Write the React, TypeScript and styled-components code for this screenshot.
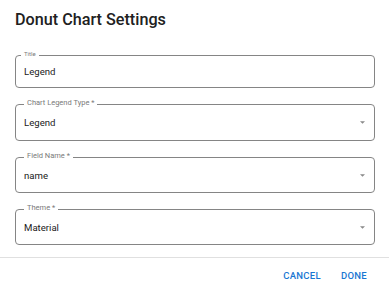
import styled, { createGlobalStyle } from "styled-components";

const GlobalStyle = createGlobalStyle`
  body {
    margin: 0;
    background: #ffffff;
    font-family: Roboto, "Liberation Sans", Arial, sans-serif;
  }
`;

interface FieldDef {
  label: string;
  value: string;
  select?: boolean;
  small?: boolean;
  height: number;
}

const fields: FieldDef[] = [
  { label: "Title", value: "Legend", small: true, height: 33 },
  { label: "Chart Legend Type *", value: "Legend", select: true, height: 37 },
  { label: "Field Name *", value: "name", select: true, height: 36 },
  { label: "Theme *", value: "Material", select: true, height: 36 },
];

const ArrowDown = () => (
  <svg width="5" height="3" viewBox="0 0 10 5" aria-hidden="true">
    <path d="M0 0l5 5 5-5z" fill="#8a8a8a" />
  </svg>
);

const App = () => {
  return (
    <>
      <GlobalStyle />
      <Dialog>
        <Title>Donut Chart Settings</Title>
        <Content>
          {fields.map((f) => (
            <Field key={f.label} $height={f.height}>
              <Label $small={f.small}>{f.label}</Label>
              <Value>{f.value}</Value>
              {f.select && <ArrowDown />}
            </Field>
          ))}
        </Content>
        <Divider />
        <Actions>
          <TextButton>Cancel</TextButton>
          <TextButton>Done</TextButton>
        </Actions>
      </Dialog>
    </>
  );
};
export default App;

const Dialog = styled.div`
  width: 389px;
  height: 290px;
  padding-top: 10px;
  box-sizing: border-box;
  display: flex;
  flex-direction: column;
`;

const Title = styled.h2`
  margin: 0;
  padding: 0 15px;
  font-size: 16.2px;
  line-height: 20px;
  font-weight: 500;
  color: #212121;
`;

const Content = styled.div`
  display: flex;
  flex-direction: column;
  gap: 16px;
  padding: 25px 14px 0 15px;
`;

const Field = styled.div<{ $height: number }>`
  position: relative;
  height: ${(p) => p.$height}px;
  box-sizing: border-box;
  border: 1px solid #858585;
  border-radius: 4px;
  display: flex;
  align-items: center;
  padding: 0 9px 0 8px;
`;

const Label = styled.span<{ $small?: boolean }>`
  position: absolute;
  top: -7px;
  left: ${(p) => (p.$small ? 5 : 8)}px;
  padding: 0 3px;
  background: #ffffff;
  font-size: ${(p) => (p.$small ? 6 : 7.5)}px;
  line-height: 9px;
  color: #7a7a7a;
  white-space: nowrap;
`;

const Value = styled.span`
  flex: 1;
  font-size: 9.6px;
  color: #212121;
`;

const Divider = styled.div`
  height: 1px;
  background: #e0e0e0;
  margin-top: 12px;
`;

const Actions = styled.div`
  display: flex;
  justify-content: flex-end;
  gap: 8px;
  padding: 5px 16px 0 0;
`;

const TextButton = styled.button`
  height: 24px;
  padding: 0 6px;
  border: none;
  background: transparent;
  font-family: Roboto, "Liberation Sans", Arial, sans-serif;
  font-size: 9.5px;
  font-weight: 500;
  letter-spacing: 0.3px;
  text-transform: uppercase;
  color: #1976d2;
  cursor: pointer;
`;
